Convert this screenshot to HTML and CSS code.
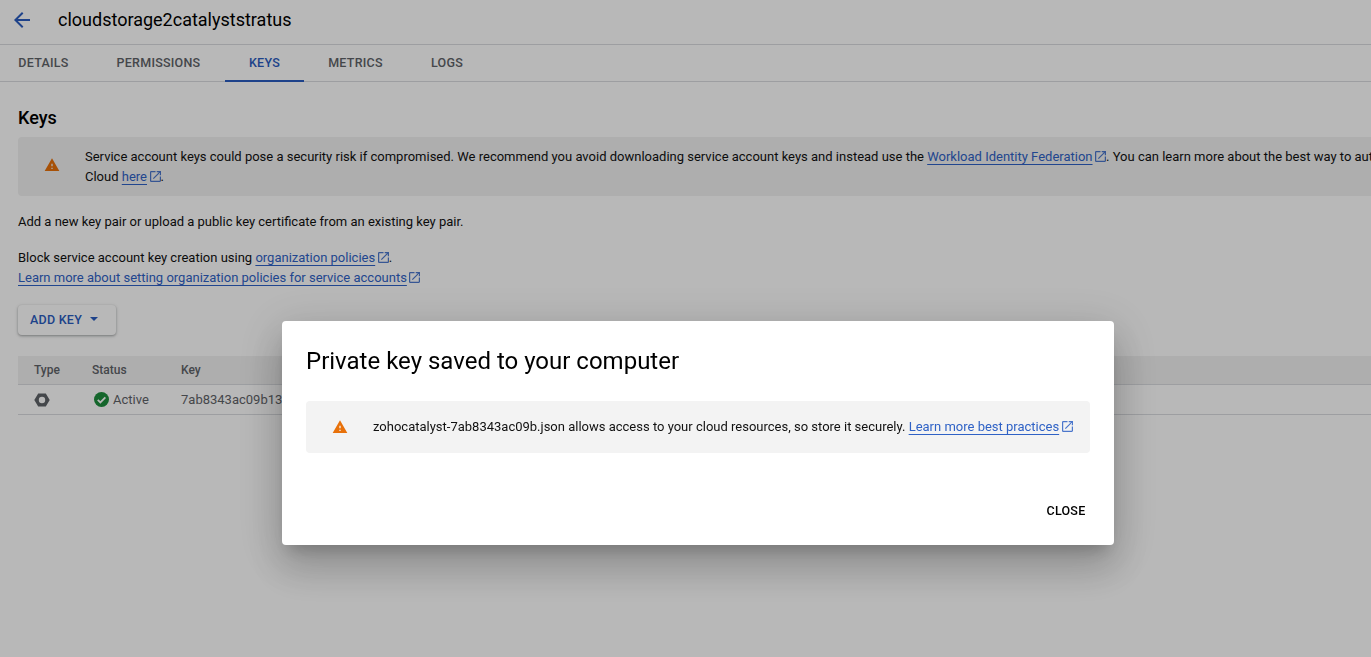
FILE: index.html
```html
<!DOCTYPE html>
<html lang="en">
<head>
    <meta charset="UTF-8">
    <meta name="viewport" content="width=device-width, initial-scale=1.0">
    <title>Service account keys</title>
    <link rel="stylesheet" href="styles.css">
</head>
<body>
    <svg class="icon-defs" width="0" height="0" aria-hidden="true">
        <symbol id="launch" viewBox="3 3 18 18">
            <path fill="currentColor" d="M19 19H5V5h7V3H5a2 2 0 0 0-2 2v14a2 2 0 0 0 2 2h14c1.100 0 2-.9 2-2v-7h-2v7zM14 3v2h3.590l-9.830 9.830 1.410 1.410L19 6.410V10h2V3h-7z"/>
        </symbol>
        <symbol id="warning" viewBox="0 0 24 24">
            <path fill="currentColor" d="M1 21h22L12 2 1 21zm12-3h-2v-2h2v2zm0-4h-2v-4h2v4z"/>
        </symbol>
    </svg>

    <header class="top-bar">
        <svg class="back-icon" viewBox="0 0 24 24"><path fill="currentColor" d="M20 11H7.830l5.590-5.590L12 4l-8 8 8 8 1.410-1.410L7.830 13H20v-2z"/></svg>
        <h1>cloudstorage2catalyststratus</h1>
    </header>

    <nav class="tabs">
        <a class="tab tab-details">Details</a>
        <a class="tab tab-permissions">Permissions</a>
        <a class="tab tab-keys active">Keys</a>
        <a class="tab tab-metrics">Metrics</a>
        <a class="tab tab-logs">Logs</a>
    </nav>

    <main class="content">
        <h2>Keys</h2>

        <div class="banner page-banner">
            <svg class="warn-icon"><use href="#warning"/></svg>
            <p>Service account keys could pose a security risk if compromised. We recommend you avoid downloading service account keys and instead use the <a class="link">Workload Identity Federation</a><svg class="launch"><use href="#launch"/></svg>. You can learn more about the best way to authenticate service accounts on Google<br>Cloud <a class="link">here</a><svg class="launch"><use href="#launch"/></svg>.</p>
        </div>

        <p class="intro">Add a new key pair or upload a public key certificate from an existing key pair.</p>

        <p class="policy">Block service account key creation using <a class="link">organization policies</a><svg class="launch"><use href="#launch"/></svg>.<br>
        <a class="link">Learn more about setting organization policies for service accounts</a><svg class="launch"><use href="#launch"/></svg></p>

        <button class="add-key">Add key <span class="caret"></span></button>

        <div class="keys-table">
            <div class="row head">
                <span class="col-type">Type</span>
                <span class="col-status">Status</span>
                <span>Key</span>
            </div>
            <div class="row">
                <span class="col-type">
                    <svg class="type-icon" viewBox="0 0 16 14"><path fill="currentColor" fill-rule="evenodd" d="M4.200 .5h7.600L15.700 7l-3.900 6.500H4.200L.3 7zM8 3.800a3.200 3.200 0 1 0 0 6.400 3.200 3.200 0 0 0 0-6.400z"/></svg>
                </span>
                <span class="col-status status-active">
                    <svg class="check-icon" viewBox="0 0 24 24"><circle cx="12" cy="12" r="12" fill="#1e8e3e"/><path fill="none" stroke="#fff" stroke-width="2.800" d="M6 12.500l4.200 4.200 8-8.200"/></svg>
                    Active
                </span>
                <span>7ab8343ac09b13</span>
            </div>
        </div>
    </main>

    <div class="scrim"></div>

    <section class="dialog">
        <h3>Private key saved to your computer</h3>
        <div class="banner dialog-banner">
            <svg class="warn-icon"><use href="#warning"/></svg>
            <p>zohocatalyst-7ab8343ac09b.json allows access to your cloud resources, so store it securely. <a class="link">Learn more best practices</a><svg class="launch"><use href="#launch"/></svg></p>
        </div>
        <div class="dialog-actions">
            <button class="close-btn">Close</button>
        </div>
    </section>
</body>
</html>
```

FILE: styles.css
```css
/* General Reset */
* {
    margin: 0;
    padding: 0;
    box-sizing: border-box;
}

html, body {
    height: 100%;
    overflow: hidden;
}

body {
    font-family: Roboto, Arial, sans-serif;
    font-size: 13px;
    line-height: 20px;
    color: #111111;
    background-color: #ffffff;
}

.icon-defs {
    position: absolute;
}

/* Header */
.top-bar {
    display: flex;
    align-items: center;
    height: 45px;
    padding: 0 0 4px 10px;
    border-bottom: 1px solid #dadce0;
}

.back-icon {
    width: 24px;
    height: 24px;
    color: #2a5cc0;
    margin-right: 24px;
}

h1 {
    font-size: 18px;
    font-weight: 400;
    color: #000000;
}

/* Tabs */
.tabs {
    display: flex;
    height: 37px;
    border-bottom: 1px solid #dadce0;
}

.tab {
    display: flex;
    align-items: center;
    justify-content: center;
    height: 37px;
    font-size: 12.5px;
    font-weight: 500;
    letter-spacing: 0.25px;
    text-transform: uppercase;
    color: #5f6368;
    border-bottom: 2px solid transparent;
}

.tab-details { margin-left: 18px; width: 51px; }
.tab-permissions { margin-left: 47px; width: 85px; }
.tab-keys { margin-left: 24px; width: 79px; }
.tab-metrics { margin-left: 24px; width: 55px; }
.tab-logs { margin-left: 48px; width: 32px; }

.tab.active {
    color: #2a5cc0;
    border-bottom-color: #2a5cc0;
}

/* Content */
.content {
    padding: 24px 0 0 18px;
}

h2 {
    font-size: 18px;
    line-height: 24px;
    font-weight: 500;
    color: #000000;
    margin-bottom: 7px;
}

.banner {
    display: flex;
    align-items: center;
    background-color: #f1f1f1;
    border-radius: 4px;
}

.page-banner {
    width: 1600px;
    height: 59px;
    padding-left: 26px;
}

.page-banner p {
    white-space: nowrap;
}

.page-banner .warn-icon {
    margin-bottom: 4px;
}

.warn-icon {
    flex: none;
    width: 16px;
    height: 16px;
    color: #e8710a;
    margin-right: 25px;
}

.link {
    color: #2f62c6;
    text-decoration: underline;
    text-underline-offset: 3px;
}

.launch {
    width: 11px;
    height: 11px;
    margin-left: 2.5px;
    vertical-align: -1px;
    color: #2f62c6;
    opacity: 0.85;
}

.intro {
    margin-top: 16px;
}

.policy {
    margin-top: 16px;
}

.add-key {
    display: flex;
    align-items: center;
    width: 98px;
    height: 30px;
    margin-top: 17px;
    padding: 0 0 2px 12px;
    font-family: inherit;
    font-size: 12.5px;
    font-weight: 500;
    letter-spacing: 0.25px;
    text-transform: uppercase;
    color: #2a5cc0;
    background-color: #ffffff;
    border: none;
    border-radius: 4px;
    box-shadow: 0 1px 2px rgba(60, 64, 67, 0.3), 0 1px 3px 1px rgba(60, 64, 67, 0.15);
}

.caret {
    width: 0;
    height: 0;
    margin-left: 8px;
    border-left: 4px solid transparent;
    border-right: 4px solid transparent;
    border-top: 4px solid #2a5cc0;
}

/* Table */
.keys-table {
    margin-top: 21px;
    font-size: 12px;
    color: #5f6368;
}

.row {
    display: flex;
    align-items: center;
    height: 30px;
    border-bottom: 1px solid #dadce0;
}

.row.head {
    height: 29px;
    font-weight: 500;
    background-color: #f1f1f1;
}

.row:not(.head) {
    font-size: 13px;
}

.col-type {
    display: flex;
    align-items: center;
    width: 74px;
    padding-left: 17px;
}

.col-type:first-child {
    padding-left: 16px;
}

.col-status {
    display: flex;
    align-items: center;
    width: 89px;
}

.type-icon {
    width: 16px;
    height: 14px;
    color: #5f6368;
}

.check-icon {
    width: 15px;
    height: 15px;
    margin: 0 4px 0 2px;
}

/* Scrim and dialog */
.scrim {
    position: fixed;
    inset: 0;
    background-color: rgba(0, 0, 0, 0.28);
}

.dialog {
    position: fixed;
    left: 282px;
    top: 321px;
    width: 832px;
    height: 224px;
    padding: 24px;
    background-color: #ffffff;
    border-radius: 4px;
    box-shadow: 0 11px 15px -7px rgba(0, 0, 0, 0.2), 0 24px 38px 3px rgba(0, 0, 0, 0.14), 0 9px 46px 8px rgba(0, 0, 0, 0.12);
}

h3 {
    font-size: 24px;
    line-height: 32px;
    font-weight: 400;
    color: #000000;
}

.dialog-banner {
    height: 52px;
    margin-top: 24px;
    padding-left: 26px;
    background-color: #f3f3f3;
}

.dialog-actions {
    display: flex;
    justify-content: flex-end;
    margin-top: 46px;
}

.close-btn {
    width: 48px;
    font-family: inherit;
    font-size: 12.5px;
    line-height: 24px;
    font-weight: 500;
    letter-spacing: 0.25px;
    text-transform: uppercase;
    text-align: center;
    color: #000000;
    background: none;
    border: none;
}
```
